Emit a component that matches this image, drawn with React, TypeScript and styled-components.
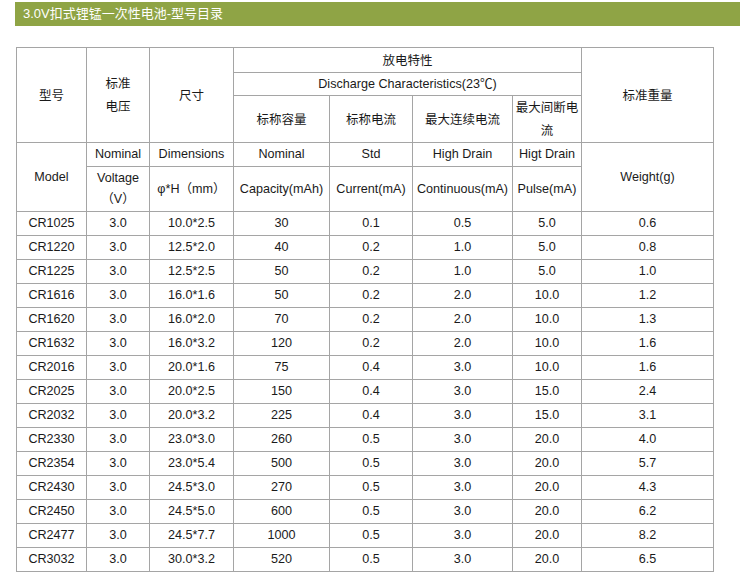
import React from "react";
import styled, { createGlobalStyle } from "styled-components";

const Global = createGlobalStyle`
  html, body { margin: 0; padding: 0; background: #fff; }
  body { font-family: "Liberation Sans", Arial, "Noto Sans CJK SC", sans-serif; color: #1a1a1a; }
`;

const Page = styled.div`
  padding: 2px 0 0 15px;
  overflow: hidden;
`;

const TitleBar = styled.div`
  height: 24px;
  background: #8fa445;
  color: #fff;
  font-size: 13px;
  line-height: 24px;
  padding-left: 8px;
  font-family: "Liberation Sans", Arial, "Noto Sans CJK SC", sans-serif;
`;

const Table = styled.table`
  margin: 21px 0 0 1px;
  border-collapse: collapse;
  table-layout: fixed;
  width: 698px;
  font-size: 12.6px;
`;

const Row = styled.tr<{ $h: number }>`
  height: ${(p) => p.$h}px;
`;

const Cell = styled.td`
  border: 1px solid #a5a5a5;
  text-align: center;
  vertical-align: middle;
  padding: 0 1px;
  line-height: 21px;
  white-space: nowrap;
`;

const Zh = styled.span`
  font-family: "Noto Sans CJK SC", sans-serif;
  font-size: 12.5px;
`;

const widths = [70, 63, 84, 96, 83, 100, 69, 132];

const data: string[][] = [
  ["CR1025", "3.0", "10.0*2.5", "30", "0.1", "0.5", "5.0", "0.6"],
  ["CR1220", "3.0", "12.5*2.0", "40", "0.2", "1.0", "5.0", "0.8"],
  ["CR1225", "3.0", "12.5*2.5", "50", "0.2", "1.0", "5.0", "1.0"],
  ["CR1616", "3.0", "16.0*1.6", "50", "0.2", "2.0", "10.0", "1.2"],
  ["CR1620", "3.0", "16.0*2.0", "70", "0.2", "2.0", "10.0", "1.3"],
  ["CR1632", "3.0", "16.0*3.2", "120", "0.2", "2.0", "10.0", "1.6"],
  ["CR2016", "3.0", "20.0*1.6", "75", "0.4", "3.0", "10.0", "1.6"],
  ["CR2025", "3.0", "20.0*2.5", "150", "0.4", "3.0", "15.0", "2.4"],
  ["CR2032", "3.0", "20.0*3.2", "225", "0.4", "3.0", "15.0", "3.1"],
  ["CR2330", "3.0", "23.0*3.0", "260", "0.5", "3.0", "20.0", "4.0"],
  ["CR2354", "3.0", "23.0*5.4", "500", "0.5", "3.0", "20.0", "5.7"],
  ["CR2430", "3.0", "24.5*3.0", "270", "0.5", "3.0", "20.0", "4.3"],
  ["CR2450", "3.0", "24.5*5.0", "600", "0.5", "3.0", "20.0", "6.2"],
  ["CR2477", "3.0", "24.5*7.7", "1000", "0.5", "3.0", "20.0", "8.2"],
  ["CR3032", "3.0", "30.0*3.2", "520", "0.5", "3.0", "20.0", "6.5"],
];

export default function App() {
  return (
    <Page>
      <Global />
      <TitleBar>3.0V扣式锂锰一次性电池-型号目录</TitleBar>
      <Table>
        <colgroup>
          {widths.map((w, i) => (
            <col key={i} style={{ width: w }} />
          ))}
        </colgroup>
        <tbody>
          <Row $h={25}>
            <Cell rowSpan={3}><Zh>型号</Zh></Cell>
            <Cell rowSpan={3}><Zh>标准<br />电压</Zh></Cell>
            <Cell rowSpan={3}><Zh>尺寸</Zh></Cell>
            <Cell colSpan={4}><Zh>放电特性</Zh></Cell>
            <Cell rowSpan={3}><Zh>标准重量</Zh></Cell>
          </Row>
          <Row $h={23}>
            <Cell colSpan={4}>Discharge Characteristics(23℃)</Cell>
          </Row>
          <Row $h={46}>
            <Cell><Zh>标称容量</Zh></Cell>
            <Cell><Zh>标称电流</Zh></Cell>
            <Cell><Zh>最大连续电流</Zh></Cell>
            <Cell><Zh>最大间断电<br />流</Zh></Cell>
          </Row>
          <Row $h={24}>
            <Cell rowSpan={2}>Model</Cell>
            <Cell>Nominal</Cell>
            <Cell>Dimensions</Cell>
            <Cell>Nominal</Cell>
            <Cell>Std</Cell>
            <Cell>High Drain</Cell>
            <Cell>Higt Drain</Cell>
            <Cell rowSpan={2}>Weight(g)</Cell>
          </Row>
          <Row $h={45}>
            <Cell>Voltage<br />（V）</Cell>
            <Cell>φ*H（mm）</Cell>
            <Cell>Capacity(mAh)</Cell>
            <Cell>Current(mA)</Cell>
            <Cell>Continuous(mA)</Cell>
            <Cell>Pulse(mA)</Cell>
          </Row>
          {data.map((r) => (
            <Row $h={24} key={r[0]}>
              {r.map((v, i) => (
                <Cell key={i}>{v}</Cell>
              ))}
            </Row>
          ))}
        </tbody>
      </Table>
    </Page>
  );
}
